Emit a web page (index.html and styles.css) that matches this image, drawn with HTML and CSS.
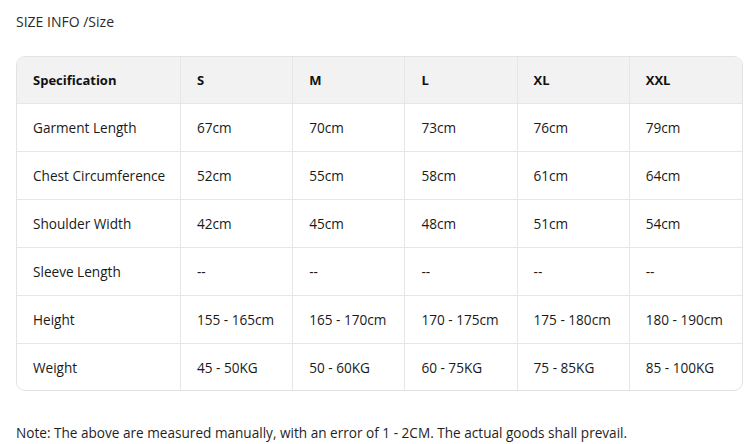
FILE: index.html
```html
<!DOCTYPE html>
<html>
<head>
<meta charset="utf-8">
<link rel="stylesheet" href="styles.css">
</head>
<body>
<div class="page">
  <div class="title">SIZE INFO /Size</div>
  <div class="table-wrap">
    <table class="size-table">
      <colgroup>
        <col class="c-first">
        <col><col><col><col><col>
      </colgroup>
      <thead>
        <tr><th>Specification</th><th>S</th><th>M</th><th>L</th><th>XL</th><th>XXL</th></tr>
      </thead>
      <tbody>
        <tr><td>Garment Length</td><td>67cm</td><td>70cm</td><td>73cm</td><td>76cm</td><td>79cm</td></tr>
        <tr><td>Chest Circumference</td><td>52cm</td><td>55cm</td><td>58cm</td><td>61cm</td><td>64cm</td></tr>
        <tr><td>Shoulder Width</td><td>42cm</td><td>45cm</td><td>48cm</td><td>51cm</td><td>54cm</td></tr>
        <tr><td>Sleeve Length</td><td>--</td><td>--</td><td>--</td><td>--</td><td>--</td></tr>
        <tr><td>Height</td><td>155 - 165cm</td><td>165 - 170cm</td><td>170 - 175cm</td><td>175 - 180cm</td><td>180 - 190cm</td></tr>
        <tr class="last"><td>Weight</td><td>45 - 50KG</td><td>50 - 60KG</td><td>60 - 75KG</td><td>75 - 85KG</td><td>85 - 100KG</td></tr>
      </tbody>
    </table>
  </div>
  <p class="note">Note: The above are measured manually, with an error of 1 - 2CM. The actual goods shall prevail.</p>
</div>
</body>
</html>
```
FILE: styles.css
```css
* { box-sizing: border-box; }
html, body { margin: 0; padding: 0; background: #fff; }
body {
  font-family: "Open Sans", "Noto Sans", sans-serif;
  font-size: 13.6px;
  color: #1a1a1a;
}
.page { padding: 12px 8px 0 16px; }
.title { font-size: 14px; line-height: 20px; color: #2a2a2a; }
.table-wrap {
  margin-top: 24px;
  width: 727px;
  border: 1px solid #e3e3e3;
  border-radius: 9px;
  overflow: hidden;
}
.size-table {
  width: 100%;
  border-collapse: separate;
  border-spacing: 0;
  table-layout: fixed;
}
.c-first { width: 164px; }
.size-table th, .size-table td {
  text-align: left;
  padding: 0 0 0 16px;
  border-right: 1px solid #e6e6e6;
  border-bottom: 1px solid #e6e6e6;
  white-space: nowrap;
}
.size-table th:last-child, .size-table td:last-child { border-right: none; }
.size-table th {
  background: #f2f2f2;
  font-weight: 700;
  font-size: 13px;
  height: 47px;
  color: #111;
}
.size-table td { height: 48px; }
.size-table tr.last td { border-bottom: none; height: 46px; }
.note { margin: 32px 0 0; font-size: 13.6px; line-height: 20px; color: #1f1f1f; }
```
